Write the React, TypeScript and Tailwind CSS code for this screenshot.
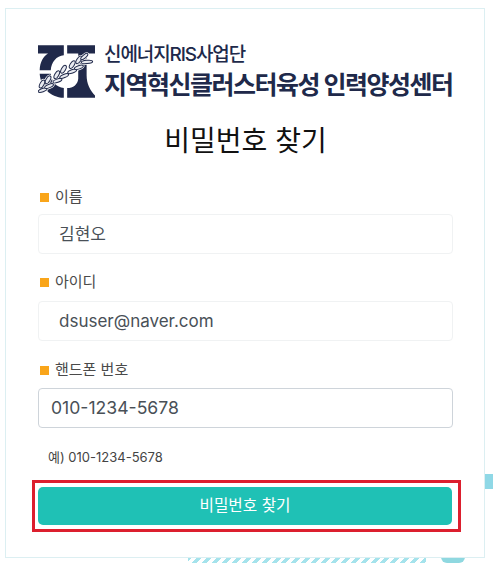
const kr = "font-['Inter','Noto_Sans_CJK_KR',sans-serif]"

const leaves = [
  [14, 134, 14, 5, -20], [12, 116, 13, 6, -62], [33, 122, 14, 5, -22], [30, 103, 13, 6, -60],
  [58, 106, 14, 5, -20], [56, 88, 13, 6, -60], [78, 92, 14, 5, -22], [76, 72, 13, 6, -60],
  [102, 78, 14, 5, -20], [102, 58, 13, 6, -58], [122, 66, 14, 5, -20], [122, 44, 13, 6, -55],
  [146, 50, 17, 5, -5], [138, 34, 13, 5, -40],
]

function Logo() {
  return (
    <svg width="57" height="53" viewBox="0 0 170 157" className="shrink-0 mt-[1px]">
      <g fill="#20294a">
        <path d="M0 0H77V30C55 32 40 50 38 75H5C6 50 15 35 30 25H0Z" />
        <path d="M5 85H38C40 108 55 125 77 128V157C35 155 8 125 5 85Z" />
        <path d="M87 0H170V25H145V90C145 115 155 135 170 150V157H87V128C105 128 118 118 120 100V25H87Z" />
      </g>
      <g fill="#fff" stroke="#fff" strokeWidth="7">
        {leaves.map(([x, y, rx, ry, r], i) => (
          <ellipse key={i} cx={x} cy={y} rx={rx} ry={ry} transform={`rotate(${r} ${x} ${y})`} />
        ))}
      </g>
      <g fill="#e8eaf0" stroke="#20294a" strokeWidth="3">
        {leaves.map(([x, y, rx, ry, r], i) => (
          <ellipse key={i} cx={x} cy={y} rx={rx} ry={ry} transform={`rotate(${r} ${x} ${y})`} />
        ))}
      </g>
    </svg>
  )
}

function Label({ children }: { children: string }) {
  return (
    <div className="flex items-center gap-[6px] pl-[2px] h-[20px] text-[15px] text-[#4a4a4a]">
      <span className="w-[9px] h-[9px] bg-[#f9a51a]" />
      {children}
    </div>
  )
}

function ReadField({ value }: { value: string }) {
  return (
    <div className="h-[40px] flex items-center pl-[20px] pt-[2px] border border-[#f0f2f3] rounded-[4px] text-[17px] text-[#495057] bg-white">
      {value}
    </div>
  )
}

export default function App() {
  return (
    <div className={`relative w-[493px] h-[563px] overflow-hidden bg-white ${kr}`}>
      {/* background bits peeking out from behind the card */}
      <div className="absolute right-0 top-[474px] w-[9px] h-[15px] bg-[#8fd8e6]" />
      <div className="absolute left-[188px] top-[557px] w-[238px] h-[6px] bg-[repeating-linear-gradient(135deg,#a5e3ec_0px,#a5e3ec_3.5px,#ffffff_3.5px,#ffffff_7px)]" />
      <div className="absolute left-[441px] top-[557px] w-[24px] h-[6px] rounded-b-full bg-[#8fd8e0]" />

      <div className="absolute left-[5px] top-[8px] w-[480px] h-[550px] border border-[#dceff2] bg-white">
        <div className="pl-[32px] pr-[31px] pt-[35px]">
          <div className="flex items-start gap-[10px]">
            <Logo />
            <div className="-ml-[1px] text-[#20294a] whitespace-nowrap">
              <div className="text-[19px] leading-[22px] tracking-[-1.1px] font-medium">신에너지RIS사업단</div>
              <div className="text-[25px] leading-[30px] tracking-[-1.5px] font-bold mt-[4px]">지역혁신클러스터육성 인력양성센터</div>
            </div>
          </div>
          <h1 className="text-center text-[28px] leading-[36px] mt-[23px] text-[#111]">비밀번호 찾기</h1>

          <div className="mt-[28px] mb-[7px]"><Label>이름</Label></div>
          <ReadField value="김현오" />
          <div className="mt-[18px] mb-[9px]"><Label>아이디</Label></div>
          <ReadField value="dsuser@naver.com" />
          <div className="mt-[19px] mb-[8px]"><Label>핸드폰 번호</Label></div>
          <div className="h-[40px] flex items-center pl-[12px] border border-[#ced4da] rounded-[4px] text-[17.6px] text-[#495057] bg-white">
            010-1234-5678
          </div>
          <p className="text-[13px] leading-[18px] text-[#444] mt-[20px] pl-[10px]">예) 010-1234-5678</p>

          <div className="mt-[14px] -ml-[6px] -mr-[8px] border-[3px] border-[#dc1f2e] pl-[3px] pr-[6px] py-[4px]">
            <button className="w-full h-[38px] rounded-[5px] bg-[#1fc1b5] text-white text-[15.7px]">비밀번호 찾기</button>
          </div>
        </div>
      </div>
    </div>
  )
}
